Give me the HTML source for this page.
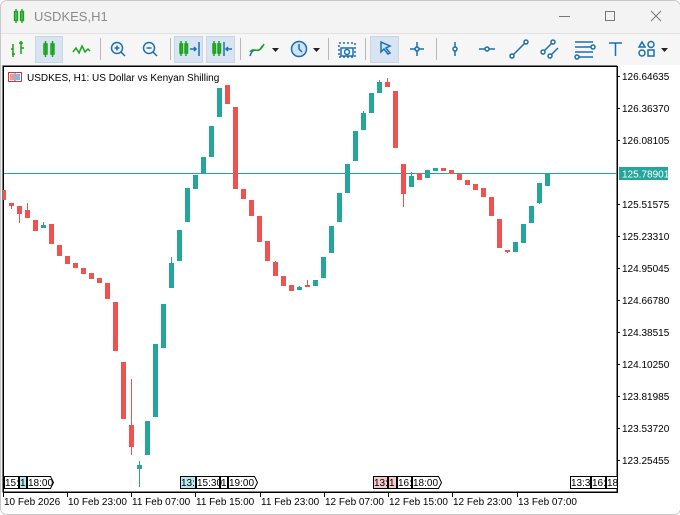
<!DOCTYPE html><html><head><style>
body{margin:0;width:680px;height:514px;overflow:hidden;background:#fff;font-family:"Liberation Sans",sans-serif;}
.win{position:absolute;left:0;top:0;width:679px;height:513px;border:1px solid #c8c8c8;border-radius:7px;background:#f3f3f3;overflow:hidden}
</style></head><body><div class="win">
<svg width="680" height="514" style="position:absolute;left:-1px;top:-1px" font-family="Liberation Sans, sans-serif">
<!-- title -->
<rect x="0" y="0" width="680" height="33" fill="#f3f3f3"/>
<g stroke="#1aa31a" stroke-width="1.3" fill="none"><rect x="14.5" y="11.5" width="3" height="9"/><line x1="16" y1="9" x2="16" y2="23"/><rect x="20.5" y="11.5" width="3" height="9"/><line x1="22" y1="9" x2="22" y2="23"/></g>
<text x="34" y="21" font-size="13" fill="#8a8a8a">USDKES,H1</text>
<line x1="559" y1="16.5" x2="570" y2="16.5" stroke="#777"/>
<rect x="605.5" y="11.5" width="9" height="9" fill="none" stroke="#777"/>
<path d="M651 11l10 10M661 11l-10 10" stroke="#777"/>
<line x1="0" y1="33.5" x2="680" y2="33.5" stroke="#e2e2e2"/>
<!-- toolbar -->
<rect x="0" y="34" width="680" height="31" fill="#f6f6f6"/>
<g fill="#d8e4f2" stroke="#c8d6e8"><rect x="35.5" y="36.5" width="27" height="26"/><rect x="174.5" y="36.5" width="28" height="26"/><rect x="206.5" y="36.5" width="28" height="26"/><rect x="370.5" y="36.5" width="28" height="26"/></g>
<g stroke="#b8b8b8"><line x1="100.5" y1="38" x2="100.5" y2="60"/><line x1="170.5" y1="38" x2="170.5" y2="60"/><line x1="240.5" y1="38" x2="240.5" y2="60"/><line x1="328.5" y1="38" x2="328.5" y2="60"/><line x1="365.5" y1="38" x2="365.5" y2="60"/><line x1="436.5" y1="38" x2="436.5" y2="60"/></g>
<g stroke="#1aa31a" stroke-width="1.5" fill="none">
<path d="M12 54h3M13 44v13M13 48h0M19 43h4M21 41v13M21 48h3"/>
<path d="M13 49h-2"/>
<rect x="44" y="44" width="3" height="10"/><line x1="45.5" y1="41" x2="45.5" y2="57"/><rect x="51" y="44" width="3" height="10"/><line x1="52.5" y1="41" x2="52.5" y2="57"/>
<path d="M73 52l3-4 3 5 3-7 3 6 3-3 2 2"/>
<rect x="180" y="44" width="2.5" height="9"/><line x1="181" y1="41" x2="181" y2="56"/><rect x="185" y="44" width="2.5" height="9"/><line x1="186" y1="41" x2="186" y2="56"/>
<rect x="213" y="44" width="2.5" height="9"/><line x1="214" y1="41" x2="214" y2="56"/><rect x="218" y="44" width="2.5" height="9"/><line x1="219" y1="41" x2="219" y2="56"/>
<path d="M250 56c4-12 8 0 12-10" stroke="#1a6fb3"/><path d="M250 52c4-6 8 4 14-8"/>
</g>
<g stroke="#1a6fb3" stroke-width="1.5" fill="none">
<path d="M190 49h6M194 47l2 2-2 2M199 42v14"/><path d="M232 49h-6M228 47l-2 2 2 2M224 42v14"/>
<circle cx="117" cy="48" r="5.5"/><path d="M121 52l4 4M114.5 48h5M117 45.5v5"/>
<circle cx="149" cy="48" r="5.5"/><path d="M153 52l4 4M146.5 48h5"/>
<circle cx="299" cy="49" r="7.5" fill="#cfe3f5"/><path d="M299 44v5l3 3"/>
<path d="M339 43h16v14h-16z" stroke-dasharray="2 2"/><rect x="341" y="48" width="12" height="8" fill="#fff"/><circle cx="347" cy="52" r="2.5"/>
<path d="M381 42l9 4-4 2 4 5-2 1-4-5-3 3z" fill="#cfe3f5"/>
<path d="M417 42v14M410 49h14"/><circle cx="417" cy="49" r="2" fill="#cfe3f5"/>
<path d="M455 42v14"/><circle cx="455" cy="49" r="2" fill="#fff"/>
<path d="M479 49h16"/><circle cx="487" cy="49" r="2" fill="#fff"/>
<path d="M512 56l14-14"/><circle cx="512" cy="56" r="2" fill="#fff"/><circle cx="526" cy="42" r="2" fill="#fff"/>
<path d="M543 52l10-10M550 56l8-8"/><circle cx="543" cy="52" r="2" fill="#fff"/><circle cx="553" cy="42" r="2" fill="#fff"/><circle cx="550" cy="56" r="2" fill="#fff"/>
<path d="M575 42h18M575 47h16M575 52h18M577 57h16"/><circle cx="593" cy="47" r="2" fill="#fff"/><circle cx="577" cy="57" r="2" fill="#fff"/>
<path d="M609 43h13M615.5 43v13"/>
<path d="M639 47l3-5 3 5z"/><circle cx="651" cy="44.5" r="3"/><circle cx="642" cy="53" r="3"/><rect x="648" y="50" width="6" height="6"/>
</g>
<g fill="#222"><path d="M272 48h7l-3.5 4z"/><path d="M313 48h7l-3.5 4z"/><path d="M661 48h7l-3.5 4z"/></g>
<path d="M547 66l5 5 5-5z" fill="#e0e0e0"/>
<!-- chart -->
<rect x="3" y="66" width="614" height="426" fill="#fff" stroke="#000"/>
<rect x="3" y="66" width="1" height="426" fill="#000"/>
<rect x="617" y="65" width="63" height="449" fill="#fff"/>
<rect x="0" y="493" width="680" height="21" fill="#fff"/>
<line x1="3" y1="492.5" x2="618" y2="492.5" stroke="#000"/>
<line x1="617.5" y1="66" x2="617.5" y2="493" stroke="#000"/>
<line x1="3" y1="66.5" x2="618" y2="66.5" stroke="#000"/>
<line x1="3.5" y1="66" x2="3.5" y2="493" stroke="#000"/>
<g fill="none" stroke-width="1"><rect x="8.5" y="72.5" width="13" height="9" stroke="#d33"/><path d="M10 75h4M10 77h4M10 79h4" stroke="#d33"/><path d="M16 75h4M16 77h4M16 79h4" stroke="#1a6fb3"/><line x1="15" y1="73" x2="15" y2="81" stroke="#1a6fb3"/></g>
<text x="27" y="81" font-size="10" fill="#000">USDKES, H1:  US Dollar vs Kenyan Shilling</text>
<line x1="4" y1="173.5" x2="617" y2="173.5" stroke="#26a69a"/>
<g id="c"></g>
<!-- price axis -->
<g font-size="10" fill="#000">
<g stroke="#000"><path d="M617 76.5h3M617 108.5h3M617 140.5h3M617 204.5h3M617 236.5h3M617 268.5h3M617 300.5h3M617 332.5h3M617 364.5h3M617 396.5h3M617 428.5h3M617 460.5h3"/></g>
<text x="622" y="80">126.64635</text><text x="622" y="112">126.36370</text><text x="622" y="144">126.08105</text>
<rect x="619" y="167" width="49" height="13" fill="#26a69a"/><text x="622" y="177.5" fill="#fff">125.78901</text>
<text x="622" y="208">125.51575</text><text x="622" y="240">125.23310</text><text x="622" y="272">124.95045</text><text x="622" y="304">124.66780</text><text x="622" y="336">124.38515</text><text x="622" y="368">124.10250</text><text x="622" y="400">123.81985</text><text x="622" y="432">123.53720</text><text x="622" y="464">123.25455</text>
</g>
<!-- time axis -->
<g stroke="#000"><path d="M3.5 492v5M67.5 492v5M131.5 492v5M195.5 492v5M260.5 492v5M324.5 492v5M388.5 492v5M452.5 492v5M517.5 492v5"/></g>
<g font-size="10" fill="#000"><text x="4" y="505">10 Feb 2026</text><text x="68" y="505">10 Feb 23:00</text><text x="132" y="505">11 Feb 07:00</text><text x="196" y="505">11 Feb 15:00</text><text x="261" y="505">11 Feb 23:00</text><text x="325" y="505">12 Feb 07:00</text><text x="389" y="505">12 Feb 15:00</text><text x="453" y="505">12 Feb 23:00</text><text x="518" y="505">13 Feb 07:00</text></g>
<g font-size="10" stroke="#000" stroke-width="1">
<rect x="4.5" y="476.5" width="14" height="12" fill="#fff"/><rect x="19.5" y="476.5" width="7" height="12" fill="#b4eaf0"/><path d="M27.5 476.5h23l3 6-3 6h-23z" fill="#fff"/>
<rect x="180.5" y="476.5" width="15" height="12" fill="#b4eaf0"/><rect x="196.5" y="476.5" width="23" height="12" fill="#fff"/><rect x="220.5" y="476.5" width="7" height="12" fill="#fff"/><path d="M228.5 476.5h26l3 6-3 6h-26z" fill="#fff"/>
<rect x="373.5" y="476.5" width="14" height="12" fill="#f8c8cc"/><rect x="388.5" y="476.5" width="8" height="12" fill="#f8c8cc"/><rect x="397.5" y="476.5" width="14" height="12" fill="#fff"/><path d="M412.5 476.5h26l3 6-3 6h-26z" fill="#fff"/>
<rect x="570.5" y="476.5" width="20" height="12" fill="#fff"/><rect x="591.5" y="476.5" width="14" height="12" fill="#fff"/><rect x="606.5" y="476.5" width="11" height="12" fill="#fff"/>
</g>
<g font-size="10" fill="#000">
<text x="5" y="486">15:</text><text x="20" y="486">1</text><text x="28" y="486">18:00</text>
<text x="181" y="486">13:</text><text x="197" y="486">15:30</text><text x="221" y="486">1</text><text x="229" y="486">19:00</text>
<text x="374" y="486">13:</text><text x="389" y="486">1</text><text x="398" y="486">16:</text><text x="413" y="486">18:00</text>
<text x="571" y="486">13:3</text><text x="592" y="486">16:</text><text x="607" y="486">18</text>
</g>
<rect x="196" y="477" width="24" height="11" fill="none"/>
</svg>
<svg width="680" height="514" style="position:absolute;left:-1px;top:-1px">
<g id="cand"></g>
</svg>
</div>
<script>
var d=[[3,'r',190,200],[9,'r',203,206,203,209],[17,'r',206,214,206,223],[25,'r',210,218,203,218],[33,'r',220,231],[41,'g',225,228,222,228],[49,'r',224,244],[57,'r',245,256],[65,'r',256,264],[73,'r',263,268],[81,'r',268,274],[89,'r',273,279],[97,'r',278,283],[105,'r',283,299],[113,'r',302,351],[121,'r',362,419],[129,'r',425,447,379,455],[137,'g',465,469,461,487],[145,'g',421,455],[153,'g',344,417],[161,'g',304,348],[169,'g',263,288,257,288],[177,'g',230,261],[185,'g',188,222],[193,'g',175,189],[201,'g',157,173],[209,'g',126,157],[217,'g',88,117],[225,'r',85,104],[233,'r',107,189],[241,'r',189,199],[249,'r',200,216],[257,'r',216,242],[265,'r',241,261],[273,'r',262,276,261,276],[281,'r',276,286],[289,'r',285,291],[297,'g',287,290,286,290],[305,'r',285,286,280,286],[313,'g',280,286],[321,'g',257,278],[329,'g',226,253],[337,'g',193,222],[345,'g',164,193],[353,'g',131,161],[361,'g',113,130,111,130],[369,'g',93,113],[377,'g',82,93,80,93],[385,'r',82,87,78,87],[393,'r',91,148],[401,'r',164,194,164,207],[409,'g',176,187,172,187],[417,'r',173,180],[425,'g',170,178],[433,'g',168,171],[441,'r',168,171],[449,'r',170,174],[457,'r',174,180],[465,'r',180,185],[473,'r',184,190],[481,'r',188,197],[489,'r',197,216],[497,'r',219,248],[505,'r',250,252,250,253],[513,'g',242,252],[521,'g',224,243],[529,'g',206,223],[537,'g',183,203,183,204],[545,'g',174,186]];
var s='';d.forEach(function(c){var col=c[1]=='r'?'#ef5350':'#26a69a';var w=c[0]==3?3:5;
if(c[4]!==undefined)s+='<rect x="'+(c[0]+2)+'" y="'+c[4]+'" width="1" height="'+(c[5]-c[4])+'" fill="'+col+'"/>';
s+='<rect x="'+c[0]+'" y="'+c[2]+'" width="'+w+'" height="'+Math.max(2,c[3]-c[2])+'" fill="'+col+'"/>';});
document.getElementById('cand').innerHTML=s;
</script>
</body></html>
